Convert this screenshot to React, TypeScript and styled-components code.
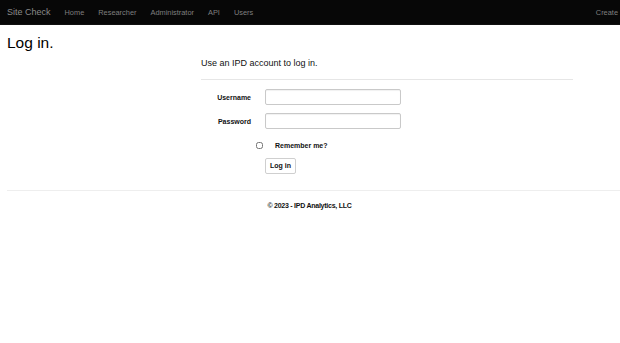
import React from "react";
import styled, { createGlobalStyle } from "styled-components";

const GlobalStyle = createGlobalStyle`
  html, body {
    margin: 0;
    padding: 0;
    background: #fff;
    font-family: "Liberation Sans", Arial, sans-serif;
    color: #333;
  }
`;

const NavBar = styled.div`
  display: flex;
  align-items: center;
  height: 25px;
  background: #070707;
  border-bottom: 1px solid #101010;
  box-sizing: border-box;
  padding: 0 2px 0 7px;
`;

const Brand = styled.a`
  font-size: 9px;
  color: #8a8a8a;
  margin-right: 14px;
`;

const NavLink = styled.a`
  font-size: 7.4px;
  color: #7f7f7f;
  margin-right: 14px;
`;

const NavRight = styled(NavLink)`
  margin-left: auto;
  margin-right: 0;
`;

const Main = styled.div`
  padding: 0 0 0 7px;
`;

const Title = styled.h2`
  margin: 9px 0 0;
  font-size: 15.5px;
  font-weight: 400;
  line-height: 17px;
  color: #000;
`;

const FormSection = styled.section`
  margin: 0 0 0 194px;
  width: 372px;
`;

const Subtitle = styled.h4`
  margin: 7px 0 0;
  font-size: 9px;
  font-weight: 400;
  line-height: 11px;
  color: #111;
`;

const Rule = styled.hr<{ $light?: boolean }>`
  border: 0;
  border-top: 1px solid ${(p) => (p.$light ? "#eeeeee" : "#e6e6e6")};
  margin: 10px 0 9px;
`;

const FormGrid = styled.div`
  display: grid;
  grid-template-columns: 64px 136px;
  row-gap: 8px;
  align-items: center;
`;

const Label = styled.label`
  font-size: 7px;
  font-weight: 700;
  color: #111;
  text-align: right;
  padding-right: 14px;
`;

const Input = styled.input`
  box-sizing: border-box;
  width: 136px;
  height: 16px;
  border: 1px solid #c9c9c9;
  border-radius: 2px;
  box-shadow: inset 0 1px 1px rgba(0, 0, 0, 0.06);
  padding: 0 4px;
  font-size: 7px;
  margin: 0;
`;

const CheckRow = styled.div`
  grid-column: 1 / 3;
  display: flex;
  align-items: center;
  padding-left: 55px;
  margin-top: 5px;
`;

const Check = styled.input`
  width: 7px;
  height: 7px;
  margin: 0 12px 0 0;
`;

const CheckLabel = styled.span`
  font-size: 7px;
  font-weight: 700;
  color: #111;
`;

const ButtonCell = styled.div`
  grid-column: 2;
  margin-top: -3px;
`;

const Button = styled.button`
  box-sizing: border-box;
  height: 16px;
  width: 31px;
  padding: 0;
  background: #fff;
  border: 1px solid #cfcfcf;
  border-radius: 2px;
  font-family: "Liberation Sans", Arial, sans-serif;
  font-size: 7px;
  font-weight: 700;
  color: #111;
`;

const Footer = styled.footer`
  margin-top: 16px;
`;

const FooterRule = styled(Rule)`
  margin: 0 0 11px;
`;

const FooterText = styled.p`
  margin: 0;
  padding-right: 8px;
  text-align: center;
  font-size: 7px;
  font-weight: 700;
  letter-spacing: -0.25px;
  color: #111;
  line-height: 8px;
`;

export default function App() {
  return (
    <>
      <GlobalStyle />
      <NavBar>
        <Brand>Site Check</Brand>
        <NavLink>Home</NavLink>
        <NavLink>Researcher</NavLink>
        <NavLink>Administrator</NavLink>
        <NavLink>API</NavLink>
        <NavLink>Users</NavLink>
        <NavRight>Create</NavRight>
      </NavBar>
      <Main>
        <Title>Log in.</Title>
        <FormSection>
          <Subtitle>Use an IPD account to log in.</Subtitle>
          <Rule />
          <FormGrid>
            <Label>Username</Label>
            <Input type="text" />
            <Label>Password</Label>
            <Input type="password" />
            <CheckRow>
              <Check type="checkbox" />
              <CheckLabel>Remember me?</CheckLabel>
            </CheckRow>
            <ButtonCell>
              <Button>Log in</Button>
            </ButtonCell>
          </FormGrid>
        </FormSection>
        <Footer>
          <FooterRule $light />
          <FooterText>© 2023 - IPD Analytics, LLC</FooterText>
        </Footer>
      </Main>
    </>
  );
}
